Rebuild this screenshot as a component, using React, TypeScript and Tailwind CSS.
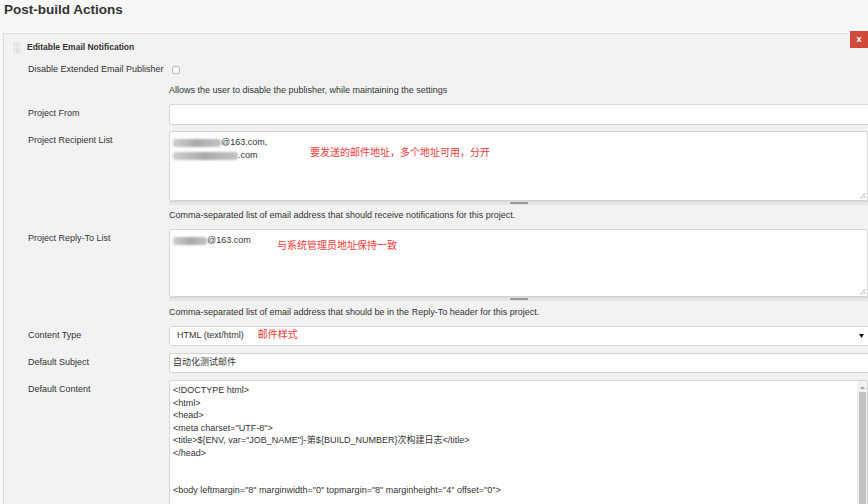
import React from 'react';

const Blur = ({ w }: { w: number }) => (
  <span
    className="inline-block align-middle h-[8px] rounded-[2px] bg-gradient-to-r from-[#cfcfcf] via-[#a9a9a9] to-[#c4c4c4] blur-[1.2px]"
    style={{ width: w }}
  />
);

const Handle = () => (
  <div className="relative h-[4px] bg-[#e6e6e6] border-t border-[#d8d8d8]">
    <div className="absolute left-[341px] top-[0px] w-[18px] h-[2px] bg-[#9a9a9a]" />
  </div>
);

const ResizeCorner = () => (
  <svg className="absolute right-[1px] bottom-[1px]" width="7" height="7" viewBox="0 0 7 7">
    <path d="M6.5 1 L1 6.5 M6.5 4 L4 6.5" stroke="#9a9a9a" strokeWidth="0.8" />
  </svg>
);

const Grip = () => (
  <svg className="mr-[6px]" width="7" height="12" viewBox="0 0 7 12">
    {[0, 1, 2].map((c) =>
      [0, 1, 2, 3, 4, 5].map((r) => (
        <rect key={`${c}-${r}`} x={c * 2.3} y={r * 2} width="1.2" height="1.2" fill="#cfcfcf" />
      ))
    )}
  </svg>
);

const Label = ({ children }: { children: React.ReactNode }) => (
  <div className="w-[141px] shrink-0 pt-[4px] leading-[11px]">{children}</div>
);

const Help = ({ children }: { children: React.ReactNode }) => (
  <div className="pl-[141px] leading-[11px]">{children}</div>
);

export default function App() {
  const code = [
    '<!DOCTYPE html>',
    '<html>',
    '<head>',
    '<meta charset="UTF-8">',
    '<title>${ENV, var="JOB_NAME"}-第${BUILD_NUMBER}次构建日志</title>',
    '</head>',
    '',
    '',
    '<body leftmargin="8" marginwidth="0" topmargin="8" marginheight="4" offset="0">',
  ];

  return (
    <div className="w-[868px] h-[504px] overflow-hidden bg-[#f8f8f8] text-[#333] text-[9px] font-['Liberation_Sans','Noto_Sans_CJK_SC',Arial,sans-serif]">
      <div className="h-[33px] pl-[4px] pt-[1px]">
        <h1 className="text-[13.5px] font-bold leading-[18px] text-[#333]">Post-build Actions</h1>
      </div>

      <div className="relative h-[471px] ml-[3px] border-l border-t border-[#dcdcdc] bg-[#f2f2f2] pl-[24px]">
        <div className="absolute right-0 top-[-3px] w-[18px] h-[17px] bg-[#d24939] text-white text-[9px] font-bold leading-[16px] text-center">
          x
        </div>

        <div className="flex items-center h-[11px] mt-[8px] -ml-[14px]">
          <Grip />
          <span className="font-bold text-[8.5px]">Editable Email Notification</span>
        </div>

        <div className="flex items-center mt-[11px] h-[11px]">
          <div className="w-[144px] shrink-0 leading-[11px]">Disable Extended Email Publisher</div>
          <div className="w-[8px] h-[8px] border border-[#bdbdbd] rounded-[2px] bg-[#fafafa]" />
        </div>

        <div className="mt-[10px]">
          <Help>Allows the user to disable the publisher, while maintaining the settings</Help>
        </div>

        <div className="flex mt-[8px] -mr-[3px]">
          <Label>Project From</Label>
          <div className="flex-1 h-[21px] bg-white border border-[#d6d6d6] rounded-[2px]" />
        </div>

        <div className="flex mt-[6px]">
          <Label>Project Recipient List</Label>
          <div className="flex-1">
            <div className="relative h-[70px] bg-white border border-[#d6d6d6] rounded-[2px] pl-[3px] pt-[4px] leading-[13px]">
              <div className="flex items-center">
                <Blur w={48} />
                <span>@163.com,</span>
              </div>
              <div className="flex items-center">
                <Blur w={65} />
                <span>.com</span>
              </div>
              <div className="absolute left-[140px] top-[15px] text-[10px] text-[#f03a3a] leading-[12px]">
                要发送的邮件地址，多个地址可用，分开
              </div>
              <ResizeCorner />
            </div>
            <Handle />
          </div>
        </div>

        <div className="mt-[5px]">
          <Help>Comma-separated list of email address that should receive notifications for this project.</Help>
        </div>

        <div className="flex mt-[8px]">
          <Label>Project Reply-To List</Label>
          <div className="flex-1">
            <div className="relative h-[68px] bg-white border border-[#d6d6d6] rounded-[2px] pl-[3px] pt-[4px] leading-[13px]">
              <div className="flex items-center">
                <Blur w={34} />
                <span>@163.com</span>
              </div>
              <div className="absolute left-[107px] top-[10px] text-[10px] text-[#f03a3a] leading-[12px]">
                与系统管理员地址保持一致
              </div>
              <ResizeCorner />
            </div>
            <Handle />
          </div>
        </div>

        <div className="mt-[6px]">
          <Help>Comma-separated list of email address that should be in the Reply-To header for this project.</Help>
        </div>

        <div className="flex mt-[8px] -mr-[3px]">
          <Label>Content Type</Label>
          <div className="relative flex-1 h-[20px] bg-white border border-[#d6d6d6] rounded-[2px] flex items-center pl-[7px]">
            <span>HTML (text/html)</span>
            <span className="ml-[14px] text-[10px] text-[#f03a3a] -mt-[3px]">邮件样式</span>
            <svg className="absolute right-[6px] top-[7px]" width="5" height="4" viewBox="0 0 5 4">
              <path d="M0 0 H5 L2.5 4 Z" fill="#111" />
            </svg>
          </div>
        </div>

        <div className="flex mt-[7px] -mr-[3px]">
          <Label>Default Subject</Label>
          <div className="flex-1 h-[20px] bg-white border border-[#d6d6d6] rounded-[2px] flex items-center pl-[3px]">
            自动化测试邮件
          </div>
        </div>

        <div className="flex mt-[7px]">
          <Label>Default Content</Label>
          <div className="relative flex-1 h-[140px] bg-white border border-[#d6d6d6] rounded-[2px] pl-[3px] pt-[3px] leading-[12.5px] text-[9px]">
            {code.map((line, i) => (
              <div key={i} className="h-[12.5px] whitespace-pre">{line}</div>
            ))}
            <div className="absolute right-0 top-0 bottom-0 w-[10px] bg-[#f1f1f1] flex flex-col items-center">
              <svg className="mt-[5px]" width="5" height="3" viewBox="0 0 5 3">
                <path d="M0 3 H5 L2.5 0 Z" fill="#a3a3a3" />
              </svg>
              <div className="mt-[3px] w-[7px] flex-1 bg-[#c1c1c1]" />
            </div>
          </div>
        </div>
      </div>
    </div>
  );
}
